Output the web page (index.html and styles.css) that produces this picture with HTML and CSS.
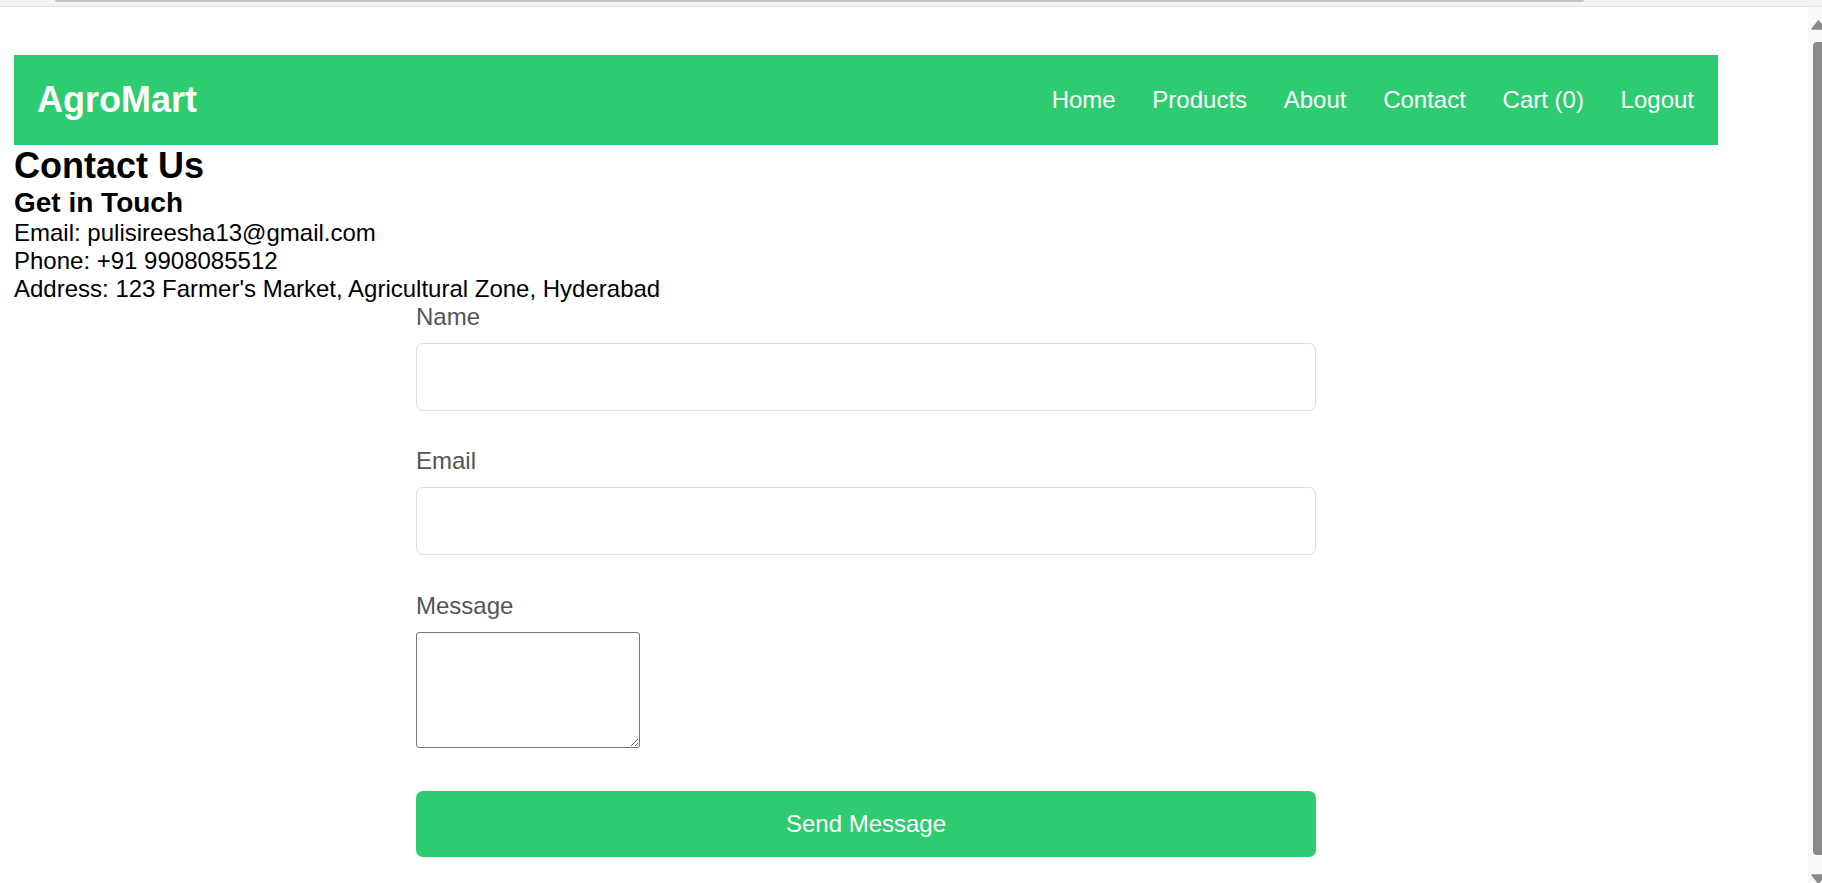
FILE: index.html
```html
<!DOCTYPE html>
<html lang="en">
<head>
<meta charset="utf-8">
<title>AgroMart - Contact</title>
<link rel="stylesheet" href="styles.css">
</head>
<body>
<div class="topstrip"><div class="hthumb"></div></div>
<div class="frame">
  <main class="page">
    <div class="container">
      <nav class="navbar">
        <div class="logo">AgroMart</div>
        <ul class="nav-links">
          <li><a href="#">Home</a></li>
          <li><a href="#">Products</a></li>
          <li><a href="#">About</a></li>
          <li><a href="#">Contact</a></li>
          <li><a href="#">Cart (0)</a></li>
          <li><a href="#">Logout</a></li>
        </ul>
      </nav>
      <h2 class="title">Contact Us</h2>
      <h3 class="subtitle">Get in Touch</h3>
      <p class="info">Email: pulisireesha13@gmail.com</p>
      <p class="info">Phone: +91 9908085512</p>
      <p class="info">Address: 123 Farmer's Market, Agricultural Zone, Hyderabad</p>
      <form class="contact-form">
        <div class="form-group">
          <label for="name">Name</label>
          <input id="name" class="field" type="text">
        </div>
        <div class="form-group">
          <label for="email">Email</label>
          <input id="email" class="field" type="email">
        </div>
        <div class="form-group message-group">
          <label for="msg">Message</label>
          <textarea id="msg" class="message"></textarea>
        </div>
        <button type="button" class="send-btn">Send Message</button>
      </form>
    </div>
  </main>
  <aside class="vscroll">
    <svg class="arrow-up" width="14" height="12" viewBox="0 0 14 12"><polygon points="4,11 10.5,3 17,11" fill="#8a8a8a" stroke="#8a8a8a" stroke-width="1.5" stroke-linejoin="round"/></svg>
    <div class="vthumb"></div>
    <svg class="arrow-down" width="14" height="9" viewBox="0 0 14 9"><polygon points="4,1 10.5,9 17,1" fill="#8a8a8a" stroke="#8a8a8a" stroke-width="1.5" stroke-linejoin="round"/></svg>
  </aside>
</div>
</body>
</html>
```

FILE: styles.css
```css
* {
  box-sizing: border-box;
}

html, body {
  margin: 0;
  padding: 0;
  background: #ffffff;
  height: 100%;
  overflow: hidden;
}

body {
  font-family: "Liberation Sans", Arial, sans-serif;
  color: #000;
  display: flex;
  flex-direction: column;
}

.topstrip {
  height: 7px;
  flex: none;
  background: #f4f4f4;
  border-bottom: 1px solid #e3e3e3;
}

.hthumb {
  margin-left: 55px;
  width: 1529px;
  height: 2px;
  background: #c2c2c2;
  border-radius: 0 0 3px 3px;
}

.frame {
  flex: 1;
  display: flex;
  min-height: 0;
}

.page {
  flex: 1;
  padding: 48px 0 0 14px;
}

.container {
  width: 1704px;
}

.navbar {
  height: 90px;
  background: #2ecc71;
  padding: 0 24px 0 23px;
  display: flex;
  align-items: center;
  justify-content: space-between;
}

.logo {
  color: #fff;
  font-size: 36px;
  font-weight: bold;
}

.nav-links {
  list-style: none;
  margin: 0;
  padding: 0;
  display: flex;
  gap: 36.7px;
}

.nav-links a {
  color: #fff;
  text-decoration: none;
  font-size: 24px;
}

.title {
  margin: 0;
  font-size: 36px;
  font-weight: bold;
}

.subtitle {
  margin: 0;
  font-size: 28px;
  font-weight: bold;
}

.info {
  margin: 0;
  font-size: 24px;
}

.contact-form {
  width: 900px;
  margin: 0 auto;
}

.form-group {
  margin-bottom: 36px;
}

.form-group label {
  display: block;
  font-size: 24px;
  color: #555;
  margin-bottom: 12px;
}

.field {
  display: block;
  width: 100%;
  height: 68px;
  border: 1px solid #dddddd;
  border-radius: 7px;
  background: #fff;
  font-size: 24px;
  padding: 0 15px;
}

.message-group {
  padding-top: 1px;
  margin-bottom: 43px;
}

.message {
  display: block;
  margin-top: 3px;
  width: 224px;
  height: 116px;
  border: 1px solid #767676;
  border-radius: 3px;
  background: #fff;
}

.send-btn {
  display: block;
  width: 100%;
  height: 66px;
  border: none;
  border-radius: 7px;
  background: #2ecc71;
  color: #fff;
  font-family: "Liberation Sans", Arial, sans-serif;
  font-size: 24px;
}

.vscroll {
  width: 14px;
  flex: none;
  background: #f9f9f9;
  display: flex;
  flex-direction: column;
  padding-top: 11px;
}

.arrow-up {
  display: block;
  flex: none;
}

.vthumb {
  margin: 12px 0 0 5px;
  width: 9px;
  height: 813px;
  background: #8a8a8a;
  border-radius: 4px 0 0 4px;
  flex: none;
}

.arrow-down {
  display: block;
  flex: none;
  margin-top: 19px;
}
```
